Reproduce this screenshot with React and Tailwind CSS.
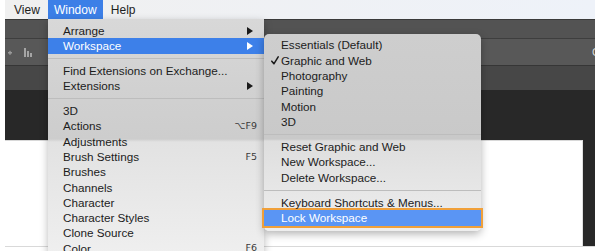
import React from "react";

const Arrow = ({ white }) => (
  <svg width="6" height="8" viewBox="0 0 6 8" className="shrink-0">
    <path d="M0 0 L6 4 L0 8 Z" fill={white ? "#ffffff" : "#1a1a1a"} />
  </svg>
);

const Check = () => (
  <svg width="8" height="9" viewBox="0 0 8 9" className="absolute left-[7px] top-[3px]">
    <path d="M0.8 5.2 L2.9 7.8 L7.2 0.8" fill="none" stroke="#1a1a1a" strokeWidth="1.5" strokeLinecap="round" strokeLinejoin="round" />
  </svg>
);

function Row({ label, arrow, shortcut, hl, check, indent = "pl-[15px]", pr = "pr-[11px]" }) {
  return (
    <div
      className={`relative h-[15.3px] flex items-center justify-between ${indent} ${pr} ${
        hl ? "bg-[#3d80e9] text-white" : "text-[#1c1c1c]"
      }`}
    >
      {check && <Check />}
      <span className="whitespace-nowrap">{label}</span>
      {arrow && <Arrow white={hl} />}
      {shortcut && (
        <span className="text-[9.5px] text-[#3a3a3a] whitespace-nowrap font-['DejaVu_Sans','Liberation_Sans',sans-serif]">
          {shortcut}
        </span>
      )}
    </div>
  );
}

const Sep = ({ h = "h-[9.5px]" }) => (
  <div className={`${h} flex items-center`}>
    <div className="h-px w-full bg-[#bdbdbd]" />
  </div>
);

export default function App() {
  return (
    <div className="w-[600px] h-[251px] bg-white relative overflow-hidden font-['Liberation_Sans',Arial,sans-serif]">
      {/* background photoshop UI */}
      <div className="mx-[5px] h-[247px] flex flex-col">
        <div className="h-[19px] flex items-center bg-[linear-gradient(to_right,#f0f0f0,#eef2f9)] text-[12px] text-[#1d1d1d]">
          <span className="ml-[9px]">View</span>
          <span className="ml-[8px] w-[55px] h-full flex items-center justify-center bg-[#3c7fe7] text-white">
            Window
          </span>
          <span className="ml-[8px]">Help</span>
        </div>
        <div className="h-px bg-[#3a3a3a]" />
        <div className="h-[18px] bg-[#535353]" />
        <div className="h-px bg-[#3e3e3e]" />
        <div className="h-[26px] bg-[#585858] flex items-center justify-between overflow-hidden">
          <svg width="30" height="12" viewBox="0 0 30 12" className="ml-[1px]">
            <rect x="2" y="6" width="4" height="1.5" fill="#9a9a9a" />
            <rect x="3.3" y="4.8" width="1.4" height="4" fill="#9a9a9a" />
            <rect x="18" y="2" width="2" height="9" fill="#a5a5a5" />
            <rect x="21" y="5" width="2" height="6" fill="#a5a5a5" />
            <rect x="24" y="7" width="2" height="4" fill="#a5a5a5" />
          </svg>
          <span className="text-[11px] text-[#d8d8d8] mr-[-5px]">C</span>
        </div>
        <div className="h-px bg-[#363636]" />
        <div className="h-[24px] bg-[#474747]" />
        <div className="h-[50px] bg-[#282828]" />
        <div className="flex-1 flex">
          <div className="flex-1 bg-white border-t border-[#d8d8d8] border-r border-r-[#e0e0e0]" />
          <div className="w-[12px] bg-[#282828]" />
        </div>
        <div className="h-px bg-[#d9d9d9]" />
      </div>

      {/* Window menu */}
      <div className="absolute left-[48px] top-[19px] w-[216px] h-[236px] pt-[4px] text-[11.7px] shadow-[0_3px_8px_rgba(0,0,0,0.28)] bg-[linear-gradient(to_bottom,#d8d8d8_0px,#d1d1d1_70px,#cdcdcd_120px,#e2e2e2_123px,#efefef_100%)]">
        <Row label="Arrange" arrow />
        <Row label="Workspace" arrow hl />
        <Sep />
        <Row label="Find Extensions on Exchange..." />
        <Row label="Extensions" arrow />
        <Sep />
        <Row label="3D" />
        <Row label="Actions" shortcut="⌥F9" pr="pr-[7px]" />
        <Row label="Adjustments" />
        <Row label="Brush Settings" shortcut="F5" pr="pr-[7px]" />
        <Row label="Brushes" />
        <Row label="Channels" />
        <Row label="Character" />
        <Row label="Character Styles" />
        <Row label="Clone Source" />
        <Row label="Color" shortcut="F6" pr="pr-[7px]" />
      </div>

      {/* Workspace submenu */}
      <div className="absolute left-[264px] top-[34px] w-[217px] pt-[3.5px] pb-[5px] rounded-[5px] text-[11.7px] shadow-[0_3px_9px_rgba(0,0,0,0.3)] bg-[linear-gradient(to_bottom,#cecece_0px,#c9c9c9_105px,#dedede_107px,#eeeeee_100%)]">
        <Row label="Essentials (Default)" indent="pl-[17px]" />
        <Row label="Graphic and Web" check indent="pl-[17px]" />
        <Row label="Photography" indent="pl-[17px]" />
        <Row label="Painting" indent="pl-[17px]" />
        <Row label="Motion" indent="pl-[17px]" />
        <Row label="3D" indent="pl-[17px]" />
        <Sep h="h-[10px]" />
        <Row label="Reset Graphic and Web" indent="pl-[17px]" />
        <Row label="New Workspace..." indent="pl-[17px]" />
        <Row label="Delete Workspace..." indent="pl-[17px]" />
        <Sep h="h-[10px]" />
        <Row label="Keyboard Shortcuts & Menus..." indent="pl-[17px]" />
        <div className="h-[15.3px] flex items-center pl-[17px] bg-[#5a95f4] text-white outline-2 outline-[#f0a03a]">
          Lock Workspace
        </div>
      </div>
    </div>
  );
}
